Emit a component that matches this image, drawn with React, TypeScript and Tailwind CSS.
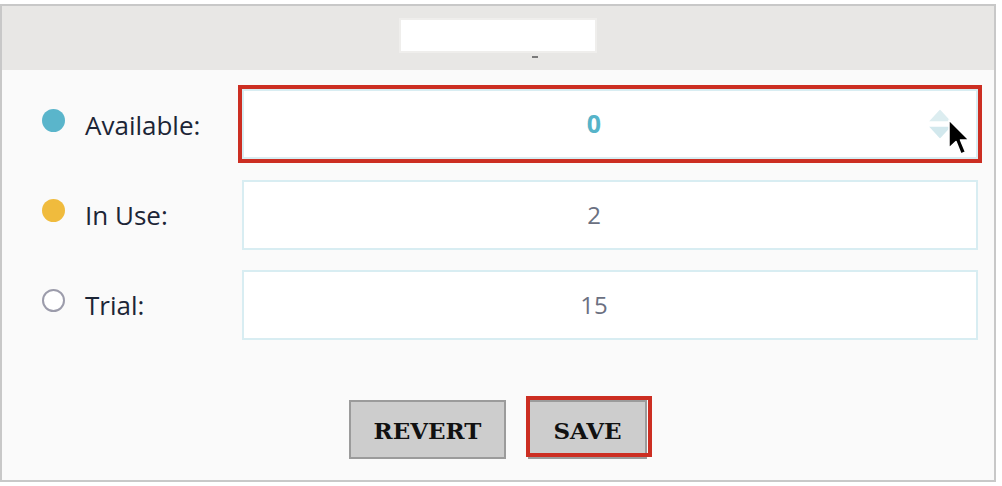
import React from "react";

type Row = {
  label: string;
  value: string;
  dot: string;
  active?: boolean;
};

const rows: Row[] = [
  { label: "Available:", value: "0", dot: "bg-[#5ab5cb]", active: true },
  { label: "In Use:", value: "2", dot: "bg-[#f0bb3d]" },
  { label: "Trial:", value: "15", dot: "bg-white border-2 border-[#9c9cab]" },
];

function Spinner() {
  return (
    <div className="absolute right-[25px] top-1/2 -translate-y-1/2 flex flex-col items-center gap-[5px]">
      <svg width="22" height="12" viewBox="0 0 22 12">
        <polygon points="11,0 22,12 0,12" fill="#dcedf0" />
      </svg>
      <svg width="22" height="12" viewBox="0 0 22 12">
        <polygon points="0,0 22,0 11,12" fill="#d2e8ed" />
      </svg>
    </div>
  );
}

function Cursor() {
  return (
    <svg
      className="absolute right-[6px] top-[28px]"
      width="22"
      height="38"
      viewBox="0 0 22 38"
    >
      <path
        d="M1 1 L1 29 L8 22.5 L13 35 L17.5 33 L12.5 21 L21 21 Z"
        fill="#000"
        stroke="#fff"
        strokeWidth="1.5"
        strokeLinejoin="round"
      />
    </svg>
  );
}

export default function App() {
  return (
    <div className="w-[1002px] h-[486px] bg-white pt-[4px] font-['Open_Sans',sans-serif]">
      <div className="w-[996px] h-[478px] border-2 border-[#c8c8c8] flex flex-col">
        {/* header */}
        <div className="h-[64px] bg-[#e8e7e5] flex flex-col items-center pt-[12px]">
          <div className="w-[198px] h-[35px] bg-white border-2 border-[#efeeec]" />
          <div className="mt-[3px] ml-[74px] w-[6px] h-[2px] bg-[#7a7a7a]" />
        </div>

        {/* body */}
        <div className="flex-1 bg-[#fafafa] flex flex-col pt-[20px]">
          <div className="flex flex-col gap-[20px]">
            {rows.map((r) => (
              <div key={r.label} className="flex items-center h-[70px] pl-[40px] pr-[16px]">
                <div className={`w-[23px] h-[23px] rounded-full mb-[10px] ${r.dot}`} />
                <div className="ml-[20px] w-[157px] text-[26px] leading-[30px] text-[#1c2536]">
                  {r.label}
                </div>
                <div
                  className={`relative flex-1 h-[70px] bg-white border-2 border-[#d8edf2] flex items-center justify-center pr-[32px] ${
                    r.active ? "outline-4 outline-[#cc2e22] h-[68px] -mt-[2px]" : ""
                  }`}
                >
                  <span
                    className={
                      r.active
                        ? "text-[25px] font-bold text-[#56b4c9]"
                        : "text-[24px] text-[#6b7081]"
                    }
                  >
                    {r.value}
                  </span>
                  {r.active && (
                    <>
                      <Spinner />
                      <Cursor />
                    </>
                  )}
                </div>
              </div>
            ))}
          </div>

          {/* buttons */}
          <div className="mt-[60px] flex justify-center gap-[22px] font-['DejaVu_Serif',serif]">
            <button className="w-[157px] h-[59px] pt-[3px] bg-[#cdcdcd] border-2 border-[#9b9b9b] text-[23px] font-bold text-[#111]">
              REVERT
            </button>
            <div className="relative">
              <button className="w-[119px] h-[59px] pt-[3px] bg-[#cdcdcd] border-2 border-[#9b9b9b] text-[23px] font-bold text-[#111]">
                SAVE
              </button>
              <div className="absolute left-[-2px] top-[-4px] w-[126px] h-[61px] border-4 border-[#cc2e22]" />
            </div>
          </div>
        </div>
      </div>
    </div>
  );
}
